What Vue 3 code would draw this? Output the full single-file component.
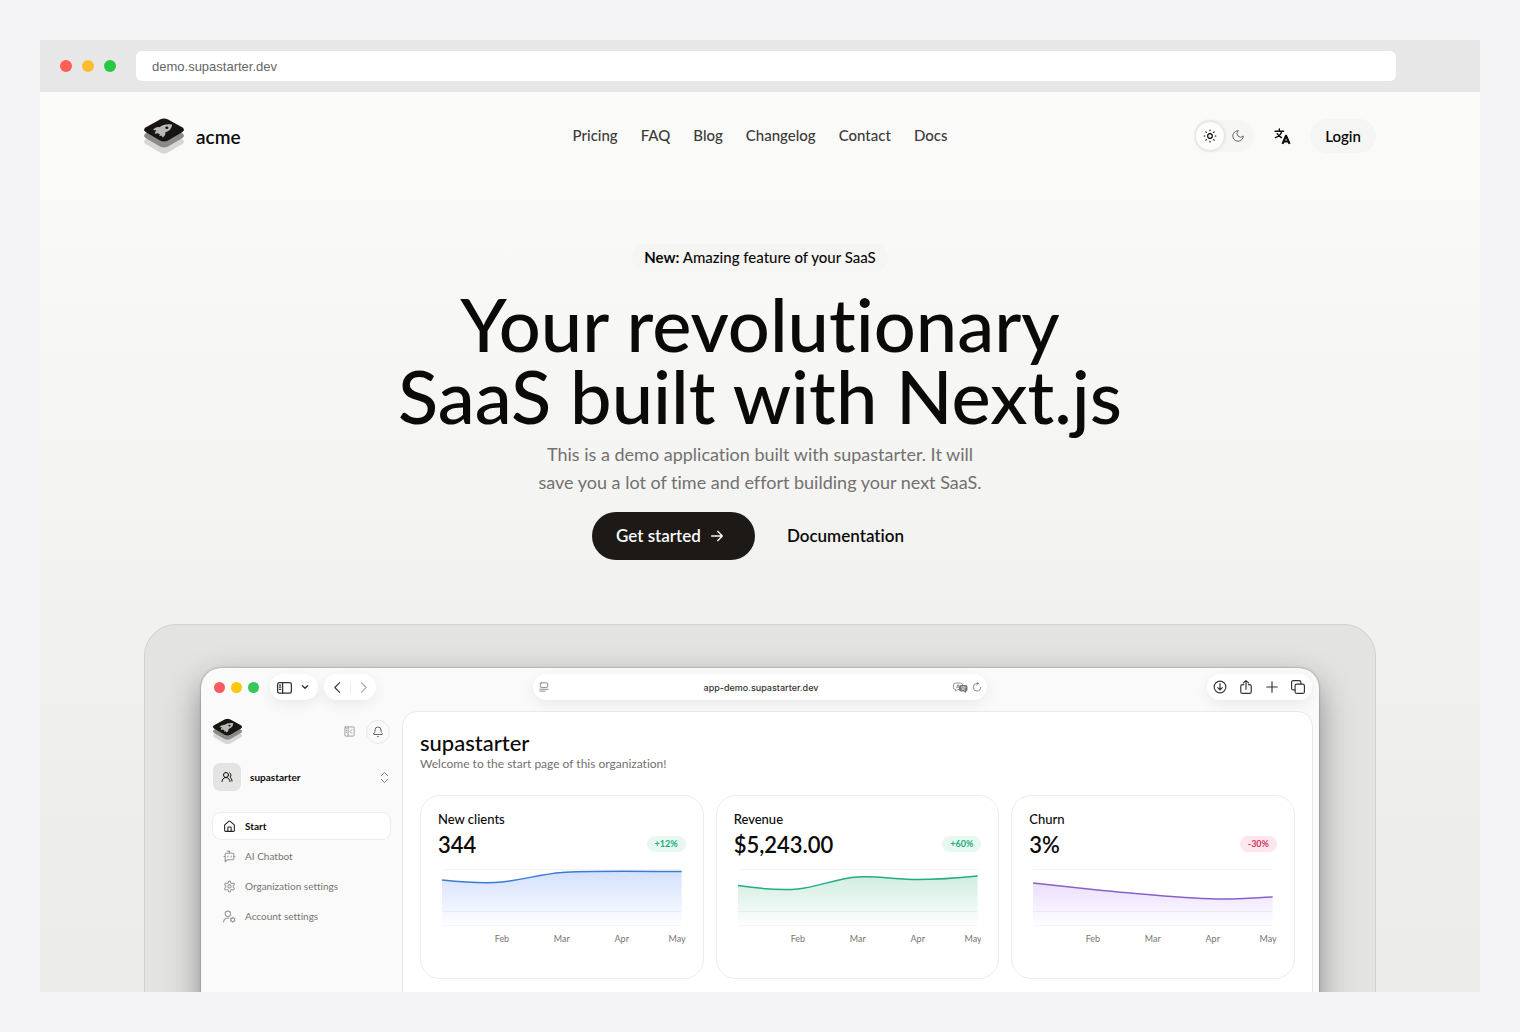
<template>
  <div class="stage">
    <div class="browser">
      <div class="browser-bar">
        <div class="lights">
          <i class="light red"></i>
          <i class="light yellow"></i>
          <i class="light green"></i>
        </div>
        <input class="browser-url" type="text" value="demo.supastarter.dev" aria-label="Address" />
      </div>

      <div class="page">
        <header class="nav container">
          <a href="#" class="brand">
            <svg class="brand-logo" viewBox="0 0 40 36" aria-hidden="true">
              <symbol id="logo" viewBox="0 0 40 36">
                <path d="M1.500 21.500 16 13.500q4-2 8 0l14.500 8q3 2.300 0 4.500L24 34.500q-4 2-8 0L1.500 26q-3-2.200 0-4.500z" fill="#d6d6d5" />
                <path d="M1.500 15.500 16 7.500q4-2 8 0l14.500 8q3 2.300 0 4.500L24 28.500q-4 2-8 0L1.500 20q-3-2.200 0-4.500z" fill="#8b8a89" />
                <path d="M1.500 9.500 16 1.500q4-2 8 0l14.500 8q3 2.300 0 4.500L24 22.500q-4 2-8 0L1.500 14q-3-2.200 0-4.500z" fill="#171412" />
                <path d="M28 6.500c-5-.8-9.500 0-12.500 2.700-2.500-.4-4.800.6-6.500 2.800l3.500.2c-1 .8-1.500 2-1.800 3.600l3-.6 2.300 1.300-1 1.800 2.800-.8.700 2c2.300-1.200 3.200-3 2.800-5 4.500-1.700 6.700-4.500 6.700-8z" fill="#b9b9b8" />
                <ellipse cx="22.800" cy="9.800" rx="1.600" ry="1.200" fill="#171412" />
              </symbol>
              <use href="#logo" />
            </svg>
            <span>acme</span>
          </a>
          <nav class="links">
            <a v-for="link in links" :key="link" href="#">{{ link }}</a>
          </nav>
          <div class="nav-actions">
            <div class="theme-switch">
              <button class="theme-option active" aria-label="Light">
                <svg viewBox="0 0 24 24" class="icon"><circle cx="12" cy="12" r="4" /><path d="M12 2v1M12 21v1M4.900 4.900l.7.700M18.400 18.400l.7.700M2 12h1M21 12h1M5.600 18.400l-.7.700M19.100 4.900l-.7.700" /></svg>
              </button>
              <button class="theme-option" aria-label="Dark">
                <svg viewBox="0 0 24 24" class="icon thin"><path d="M12 3a6 6 0 0 0 9 9 9 9 0 1 1-9-9Z" /></svg>
              </button>
            </div>
            <button class="language" aria-label="Language">
              <svg viewBox="0 0 24 24" class="icon"><path d="M1.500 4.500h12M7.500 1.500v3M4.500 8c1.500 2.500 3.500 4 6 5.500M11 4.500c-1 4.500-4 7.500-9 9" /><path class="letter" d="M12 22.500l5-11.500 5 11.500M13.800 19h6.500" /></svg>
            </button>
            <a href="#" class="login">Login</a>
          </div>
        </header>

        <section class="hero">
          <p class="pill"><strong>New:</strong> Amazing feature of your SaaS</p>
          <h1>Your revolutionary<br />SaaS built with Next.js</h1>
          <p class="lead">This is a demo application built with supastarter. It will<br />save you a lot of time and effort building your next SaaS.</p>
          <div class="cta">
            <a href="#" class="cta-primary">
              Get started
              <svg viewBox="0 0 24 24" class="icon"><path d="M4 12h16M13 5l7 7-7 7" /></svg>
            </a>
            <a href="#" class="cta-secondary">Documentation</a>
          </div>
        </section>

        <div class="container">
          <div class="showcase">
            <div class="window">
              <div class="toolbar">
                <div class="toolbar-side">
                  <div class="lights small">
                    <i class="light red"></i>
                    <i class="light yellow"></i>
                    <i class="light green"></i>
                  </div>
                  <div class="capsule views">
                    <button aria-label="Sidebar">
                      <svg viewBox="0 0 24 24" class="icon panel-icon"><rect x="1" y="4" width="22" height="17" rx="3" /><path d="M9 4v17M4 8h2M4 11.500h2M4 15h2" /></svg>
                    </button>
                    <button aria-label="More">
                      <svg viewBox="0 0 24 24" class="icon chevron"><path d="m4 8 8 8 8-8" /></svg>
                    </button>
                  </div>
                  <div class="capsule history">
                    <button aria-label="Back">
                      <svg viewBox="0 0 24 24" class="icon"><path d="m16 3-9 9 9 9" /></svg>
                    </button>
                    <button class="faded" aria-label="Forward">
                      <svg viewBox="0 0 24 24" class="icon"><path d="m8 3 9 9-9 9" /></svg>
                    </button>
                  </div>
                </div>
                <div class="capsule address">
                  <svg viewBox="0 0 24 24" class="icon"><rect x="3" y="2" width="18" height="11" rx="2" /><path d="M2 17.500h20M2 22h13" /></svg>
                  <span class="address-text">app-demo.supastarter.dev</span>
                  <span class="address-icons">
                    <svg viewBox="0 0 30 22" class="translate-icon" aria-hidden="true">
                      <path d="M6 2h9q4 0 4 4v5q0 4-4 4H9l-4 3v-3q-4 0-4-4V6q0-4 5-4z" fill="none" stroke="#777" stroke-width="1.500" />
                      <path d="m7 12 3-7 3 7M8 10h4" fill="none" stroke="#777" stroke-width="1.500" />
                      <path d="M16 6h9q4 0 4 4v5q0 4-3 4v3l-4-3h-6q-4 0-4-4v-5q0-4 4-4z" fill="#777" />
                      <path d="M16 10h9M20.500 8v2M24 10q-2 5-7 6M17 11q2 4 7 5" fill="none" stroke="#fff" stroke-width="1.200" />
                    </svg>
                    <svg viewBox="0 0 24 24" class="icon"><path d="M21 12.500a9 9 0 1 1-9-9h3M11 0l4 3.500-4 4" /></svg>
                  </span>
                </div>
                <div class="toolbar-side end">
                  <div class="capsule tools">
                    <button aria-label="Downloads">
                      <svg viewBox="0 0 24 24" class="icon"><circle cx="12" cy="12" r="10" /><path d="M12 6v11M8 13l4 4 4-4" /></svg>
                    </button>
                    <button aria-label="Share">
                      <svg viewBox="0 0 24 24" class="icon"><path d="M8 8H6q-3 0-3 3v9q0 3 3 3h12q3 0 3-3v-9q0-3-3-3h-2M12 16V1M7.500 5 12 1 16.500 5" /></svg>
                    </button>
                    <button aria-label="New tab">
                      <svg viewBox="0 0 24 24" class="icon"><path d="M12 3v18M3 12h18" /></svg>
                    </button>
                    <button aria-label="Tabs">
                      <svg viewBox="0 0 24 24" class="icon"><rect x="7" y="7" width="16" height="16" rx="3" /><path d="M7 17H4q-3 0-3-3V4q0-3 3-3h10q3 0 3 3v3" /></svg>
                    </button>
                  </div>
                </div>
              </div>

              <div class="app">
                <aside class="sidebar">
                  <div class="sidebar-top">
                    <svg class="sidebar-logo" viewBox="0 0 40 36" aria-hidden="true"><use href="#logo" /></svg>
                    <button class="collapse" aria-label="Collapse sidebar">
                      <svg viewBox="0 0 24 24" class="icon"><rect x="2" y="2" width="20" height="20" rx="1" /><path d="M9 2v20M5 6h1M5 10h1M5 14h1M17 8l-4 4 4 4" /></svg>
                    </button>
                    <button class="bell" aria-label="Notifications">
                      <svg viewBox="0 0 24 24" class="icon"><path d="M10.300 21a2 2 0 0 0 3.400 0M3.300 15.300A1 1 0 0 0 4 17h16a1 1 0 0 0 .7-1.700C19.400 14 18 12.500 18 8A6 6 0 0 0 6 8c0 4.500-1.400 6-2.700 7.300" /></svg>
                    </button>
                  </div>
                  <button class="org">
                    <span class="org-avatar">
                      <svg viewBox="0 0 24 24" class="icon"><path d="M18 21a8 8 0 0 0-16 0M22 20c0-3.400-2-6.500-4-8a5 5 0 0 0-.5-8.300" /><circle cx="10" cy="8" r="5" /></svg>
                    </span>
                    <span class="org-name">supastarter</span>
                    <svg viewBox="0 0 24 24" class="icon org-caret"><path d="m5 8 7-7 7 7M5 16l7 7 7-7" /></svg>
                  </button>
                  <nav class="menu">
                    <a v-for="item in menu" :key="item.label" href="#" :class="{ current: item.current }">
                      <svg viewBox="0 0 24 24" class="icon"><path v-for="d in item.icon" :key="d" :d="d" /></svg>
                      {{ item.label }}
                    </a>
                  </nav>
                </aside>

                <main class="panel">
                  <h2>supastarter</h2>
                  <p class="welcome">Welcome to the start page of this organization!</p>
                  <div class="cards">
                    <article v-for="stat in stats" :key="stat.name" class="card">
                      <h3>{{ stat.name }}</h3>
                      <div class="card-row">
                        <span class="value">{{ stat.value }}</span>
                        <span class="trend" :class="stat.trendClass">{{ stat.trend }}</span>
                      </div>
                      <svg class="chart" viewBox="0 0 248 80">
                        <defs>
                          <linearGradient :id="stat.id" x1="0" y1="0" x2="0" y2="60" gradientUnits="userSpaceOnUse">
                            <stop offset="0" :stop-color="stat.fill" stop-opacity="0.240" />
                            <stop offset="0.700" :stop-color="stat.fill" stop-opacity="0.080" />
                            <stop offset="1" :stop-color="stat.fill" stop-opacity="0" />
                          </linearGradient>
                        </defs>
                        <path class="grid-line" d="M4 3.500h240M4 45.500h240M4 59.500h240" />
                        <path :d="stat.line + 'V60H4z'" :fill="`url(#${stat.id})`" />
                        <path :d="stat.line" :stroke="stat.stroke" class="line" />
                        <text x="64" y="76">Feb</text>
                        <text x="124" y="76">Mar</text>
                        <text x="184" y="76">Apr</text>
                        <text x="248" y="76" class="last">May</text>
                      </svg>
                    </article>
                  </div>
                </main>
              </div>
            </div>
          </div>
        </div>
      </div>
    </div>
  </div>
</template>

<script setup>
const links = ['Pricing', 'FAQ', 'Blog', 'Changelog', 'Contact', 'Docs']

const menu = [
  {
    label: 'Start',
    current: true,
    icon: [
      'M9 21v-7a1 1 0 0 1 1-1h4a1 1 0 0 1 1 1v7',
      'M3 10a2 2 0 0 1 .7-1.500l7-6a2 2 0 0 1 2.600 0l7 6A2 2 0 0 1 21 10v9a2 2 0 0 1-2 2H5a2 2 0 0 1-2-2z',
    ],
  },
  {
    label: 'AI Chatbot',
    icon: [
      'M12 6V2H8',
      'm8 18-4 4V8a2 2 0 0 1 2-2h12a2 2 0 0 1 2 2v8a2 2 0 0 1-2 2Z',
      'M2 12h2M20 12h2M9 11v2M15 11v2',
    ],
  },
  {
    label: 'Organization settings',
    icon: [
      'M12.200 2h-.4a2 2 0 0 0-2 2v.2a2 2 0 0 1-1 1.700l-.4.300a2 2 0 0 1-2 0l-.2-.1a2 2 0 0 0-2.700.700l-.2.400a2 2 0 0 0 .7 2.700l.2.100a2 2 0 0 1 1 1.700v.5a2 2 0 0 1-1 1.800l-.2.100a2 2 0 0 0-.7 2.700l.2.400a2 2 0 0 0 2.700.700l.2-.1a2 2 0 0 1 2 0l.4.300a2 2 0 0 1 1 1.700v.2a2 2 0 0 0 2 2h.4a2 2 0 0 0 2-2v-.2a2 2 0 0 1 1-1.700l.4-.3a2 2 0 0 1 2 0l.2.100a2 2 0 0 0 2.700-.7l.2-.4a2 2 0 0 0-.7-2.700l-.2-.1a2 2 0 0 1-1-1.700v-.5a2 2 0 0 1 1-1.800l.2-.1a2 2 0 0 0 .7-2.700l-.2-.4a2 2 0 0 0-2.700-.7l-.2.100a2 2 0 0 1-2 0l-.4-.3a2 2 0 0 1-1-1.700V4a2 2 0 0 0-2-2z',
      'M15 12a3 3 0 1 1-6 0 3 3 0 0 1 6 0z',
    ],
  },
  {
    label: 'Account settings',
    icon: [
      'M14 7a5 5 0 1 1-10 0 5 5 0 0 1 10 0z',
      'M1 22a8 8 0 0 1 10-7',
      'M21.500 18a3.500 3.500 0 1 1-7 0 3.500 3.500 0 0 1 7 0z',
      'M18 13.500v1M18 21.500v1M22 15.700l-1 .6M15 19.700l-1 .6M22 20.300l-1-.6M15 16.300l-1-.6',
    ],
  },
]

const stats = [
  {
    id: 'fill-clients',
    name: 'New clients',
    value: '344',
    trend: '+12%',
    trendClass: 'up',
    stroke: '#3b7bd0',
    fill: '#3b76f6',
    line: 'M4 14C24 16 44 18 64 16C84 14 104 8 124 6.500C144 4.500 184 5 244 5.500',
  },
  {
    id: 'fill-revenue',
    name: 'Revenue',
    value: '$5,243.00',
    trend: '+60%',
    trendClass: 'up',
    stroke: '#22ac80',
    fill: '#22a66e',
    line: 'M4 19.500C24 22.500 44 25 64 23C84 21 104 12 124 11C144 10 164 13.500 184 13.500C204 13.500 224 12 244 10',
  },
  {
    id: 'fill-churn',
    name: 'Churn',
    value: '3%',
    trend: '-30%',
    trendClass: 'down',
    stroke: '#8b5fcb',
    fill: '#8a4df5',
    line: 'M4 17C24 19 44 21.500 64 23.500C84 25.500 104 27.500 124 29C154 31.500 174 33 194 33C214 33 224 32 244 31',
  },
]
</script>

<style>
body {
  margin: 0;
  background: #f4f4f7;
}
</style>

<style scoped>
* {
  box-sizing: border-box;
}

.stage {
  height: 100vh;
  padding: 40px;
  font-family: Lato, "Noto Sans", sans-serif;
  font-variant-ligatures: none;
  color: #0c0a09;
}

h1,
h2,
h3,
p {
  margin: 0;
  font-weight: 500;
}

a {
  color: inherit;
  text-decoration: none;
}

button {
  display: grid;
  place-items: center;
  padding: 0;
  border: none;
  background: none;
  color: inherit;
  font: inherit;
  cursor: pointer;
}

.icon {
  width: 14px;
  height: 14px;
  flex: none;
  fill: none;
  stroke: currentColor;
  stroke-width: 2;
  stroke-linecap: round;
  stroke-linejoin: round;
}

.browser {
  display: flex;
  flex-direction: column;
  height: 100%;
  overflow: hidden;
}

.browser-bar {
  display: flex;
  flex: none;
  align-items: center;
  gap: 20px;
  height: 52px;
  padding: 0 84px 0 20px;
  background: #e7e7e7;
}

.lights {
  display: flex;
  gap: 10px;
}

.light {
  width: 12px;
  height: 12px;
  border-radius: 50%;
}

.red {
  background: #ff5f57;
}

.yellow {
  background: #febc2e;
}

.green {
  background: #28c840;
}

.browser-url {
  flex: 1;
  height: 30px;
  padding: 0 16px;
  border: none;
  border-radius: 6px;
  background: #fff;
  color: #666;
  font-family: "Liberation Sans", Arial, sans-serif;
  font-size: 13px;
}

.page {
  flex: 1;
  min-height: 0;
  overflow: hidden;
  background: linear-gradient(180deg, #fbfbf9 0%, #f6f6f5 33%, #f1f1ef 58%, #ebebe9 100%);
}

.container {
  width: 100%;
  max-width: 1280px;
  margin: 0 auto;
  padding: 0 24px;
}

.nav {
  display: grid;
  grid-template-columns: 1fr auto 1fr;
  align-items: center;
  height: 88px;
}

.brand {
  display: flex;
  align-items: center;
  gap: 12px;
  font-size: 19px;
  font-weight: 600;
}

.brand-logo {
  width: 40px;
  height: 36px;
}

.links {
  display: flex;
  gap: 23px;
  font-size: 15px;
  font-weight: 500;
  line-height: 20px;
  padding-bottom: 2px;
  color: #3d3b39;
}

.nav-actions {
  display: flex;
  align-items: center;
  justify-content: flex-end;
}

.theme-switch {
  display: flex;
  padding: 2px;
  border-radius: 16px;
  background: #f5f5f3;
}

.theme-option {
  width: 28px;
  height: 28px;
  border-radius: 50%;
  color: #66625f;
}

.theme-option.active {
  background: #fdfdfc;
  color: #0c0a09;
  box-shadow: 0 0 4px rgba(0, 0, 0, 0.16);
}

.theme-option .thin {
  stroke-width: 1.6;
}

.language {
  width: 56px;
  height: 36px;
}

.language .icon {
  width: 17px;
  height: 17px;
}

.language .letter {
  stroke-width: 3;
  stroke-linecap: butt;
}

.login {
  padding: 0 15px;
  border-radius: 18px;
  background: #f5f5f3;
  font-size: 15px;
  font-weight: 600;
  line-height: 34px;
}

.hero {
  display: flex;
  flex-direction: column;
  align-items: center;
  padding: 64px 24px;
  text-align: center;
}

.pill {
  padding: 0 12px 2px;
  border-radius: 14px;
  background: #f5f5f3;
  font-size: 15px;
  line-height: 26px;
}

.pill strong {
  font-weight: 700;
}

h1 {
  margin-top: 16px;
  font-size: 74px;
  line-height: 72px;
}

.lead {
  margin-top: 8px;
  color: #73706e;
  font-size: 18px;
  font-weight: 400;
  line-height: 28px;
}

.cta {
  display: flex;
  gap: 8px;
  margin-top: 16px;
  font-size: 17px;
  font-weight: 600;
  line-height: 48px;
}

.cta-primary {
  display: flex;
  align-items: center;
  gap: 8px;
  padding: 0 30px 0 24px;
  border-radius: 24px;
  background: #1c1917;
  color: #fafaf9;
}

.cta-primary .icon {
  width: 16px;
  height: 16px;
}

.cta-secondary {
  padding: 0 24px;
}

.showcase {
  padding: 43px 56px 56px;
  border: 1px solid #d2d2d0;
  border-radius: 32px;
  background: #e3e3e1;
}

.window {
  min-height: 620px;
  border-radius: 20px;
  background: #fafafa;
  box-shadow: 0 0 2px rgba(0, 0, 0, 0.45), 0 14px 34px rgba(0, 0, 0, 0.4);
}

.toolbar {
  display: grid;
  grid-template-columns: 1fr 454px 1fr;
  align-items: center;
  height: 38px;
  padding: 0 7px;
}

.toolbar-side {
  display: flex;
  align-items: center;
}

.toolbar-side.end {
  justify-content: flex-end;
}

.lights.small {
  gap: 6px;
  margin: 0 11px 0 6px;
}

.small .light {
  width: 11px;
  height: 11px;
}

.small .red {
  background: #fb5b60;
}

.small .yellow {
  background: #fac70a;
}

.small .green {
  background: #34c759;
}

.capsule {
  display: flex;
  align-items: center;
  height: 26px;
  border-radius: 13px;
  background: #fff;
  box-shadow: 0 4px 14px rgba(0, 0, 0, 0.07);
  color: #333;
}

.views {
  gap: 9px;
  margin-right: 6px;
  padding: 0 9px 0 7px;
}

.capsule .panel-icon {
  width: 15px;
  height: 15px;
}

.capsule .chevron {
  width: 8px;
  height: 8px;
  stroke-width: 4;
}

.history button {
  width: 26px;
}

.history .icon {
  width: 13px;
  height: 13px;
}

.history .faded {
  border-left: 1px solid #eee;
  color: #aaa;
}

.address {
  justify-content: space-between;
  padding: 0 5px 0 6px;
  color: #777;
}

.address-text {
  padding-left: 20px;
  color: #333;
  font-family: Inter, sans-serif;
  font-size: 9px;
  font-weight: 500;
}

.address .icon {
  width: 10px;
  height: 10px;
}

.address-icons {
  display: flex;
  align-items: center;
  gap: 4px;
}

.translate-icon {
  width: 15px;
  height: 11px;
}

.tools {
  gap: 12px;
  padding: 0 7px 0 6px;
}

.app {
  display: flex;
  margin-top: 5px;
  padding-right: 6px;
}

.sidebar {
  display: flex;
  flex: none;
  flex-direction: column;
  width: 201px;
  padding: 7px 12px 0;
}

.sidebar-top {
  display: flex;
  align-items: center;
}

.sidebar-logo {
  width: 29px;
  height: 27px;
}

.collapse {
  margin-left: auto;
  color: #999;
}

.collapse .icon {
  width: 11px;
  height: 11px;
}

.bell {
  width: 24px;
  height: 24px;
  margin-left: 11px;
  border: 1px solid #e9e9e8;
  border-radius: 50%;
  color: #666;
}

.bell .icon {
  width: 12px;
  height: 12px;
}

.org {
  display: flex;
  align-items: center;
  margin-top: 18px;
}

.org-avatar {
  display: grid;
  place-items: center;
  width: 28px;
  height: 28px;
  margin-right: 9px;
  border-radius: 7px;
  background: #e4e4e3;
}

.org-avatar .icon {
  width: 12px;
  height: 12px;
}

.org-name {
  font-size: 10px;
  font-weight: 700;
}

.org-caret {
  width: 11px;
  height: 11px;
  margin-left: auto;
  color: #777;
}

.menu {
  display: grid;
  gap: 4px;
  margin-top: 22px;
  color: #777471;
  font-size: 10px;
}

.menu a {
  display: flex;
  align-items: center;
  gap: 9px;
  height: 26px;
  padding: 0 10px;
  border-radius: 8px;
}

.menu a.current {
  background: #fff;
  box-shadow: 0 0 0 1px #ececeb;
  color: #0c0a09;
  font-weight: 700;
}

.menu .icon {
  width: 13px;
  height: 13px;
  color: #999;
}

.menu .current .icon {
  color: #222;
}

.panel {
  flex: 1;
  min-width: 0;
  min-height: 560px;
  padding: 18px 17px;
  border: 1px solid #e9e9e8;
  border-radius: 15px;
  background: #fff;
}

h2 {
  font-size: 22px;
  line-height: 26px;
}

.welcome {
  color: #73706e;
  font-size: 12px;
  font-weight: 400;
  line-height: 16px;
}

.cards {
  display: grid;
  grid-template-columns: repeat(3, 1fr);
  gap: 12px;
  margin-top: 23px;
}

.card {
  height: 184px;
  padding: 14px 17px;
  border: 1px solid #ececeb;
  border-radius: 20px;
}

h3 {
  font-size: 13px;
  line-height: 18px;
}

.card-row {
  display: flex;
  align-items: center;
  justify-content: space-between;
  height: 32px;
}

.value {
  font-size: 22px;
  font-weight: 600;
}

.trend {
  padding: 0 8px;
  border-radius: 8px;
  font-size: 9px;
  font-weight: 700;
  line-height: 16px;
}

.up {
  background: #e7f8f0;
  color: #22ac7c;
}

.down {
  background: #fde6ec;
  color: #d23766;
}

.chart {
  display: block;
  width: 100%;
  margin-top: 6px;
}

.grid-line {
  fill: none;
  stroke: #f4f4f4;
}

.line {
  fill: none;
  stroke-width: 1.5;
}

.chart text {
  fill: #777471;
  font-size: 9px;
  text-anchor: middle;
}

.chart .last {
  text-anchor: end;
}
</style>
